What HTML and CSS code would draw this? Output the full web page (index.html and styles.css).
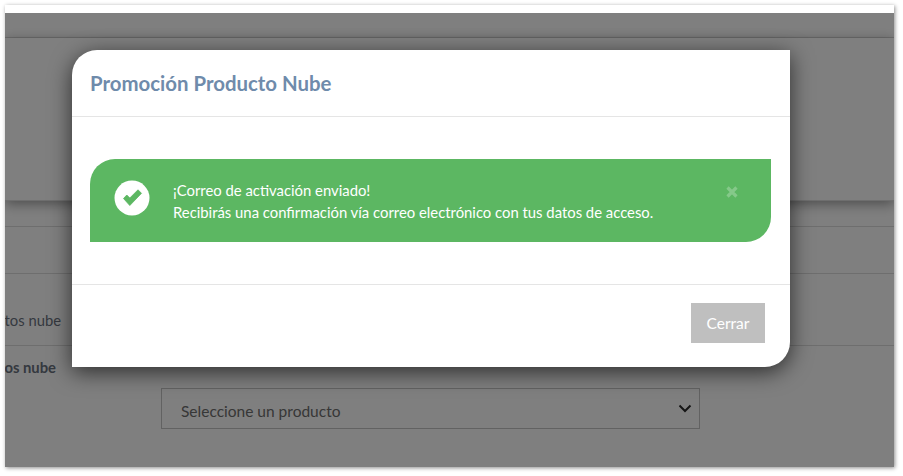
FILE: index.html
```html
<!DOCTYPE html>
<html lang="es">
<head>
    <meta charset="UTF-8">
    <meta name="viewport" content="width=device-width, initial-scale=1.0">
    <title>Promoción Producto Nube</title>
    <link rel="stylesheet" href="styles.css">
</head>
<body>

<div class="captura">
    <!-- Página de fondo -->
    <div class="pagina">
        <div class="franja"></div>
        <div class="seccion seccion-top"></div>
        <div class="seccion seccion-hero"></div>
        <div class="seccion seccion-tab"></div>
        <div class="seccion seccion-sub"></div>
        <div class="fila fila-productos">
            <span class="etiqueta">tos nube</span>
        </div>
        <div class="fila-form">
            <span class="etiqueta etiqueta-bold">os nube</span>
            <div class="select-falso">
                <span>Seleccione un producto</span>
                <svg class="chevron" viewBox="0 0 14 9" width="14" height="9">
                    <path d="M1.500 1.500 7 7l5.500-5.500" fill="none" stroke="#2b2b2b" stroke-width="2"/>
                </svg>
            </div>
        </div>
    </div>

    <!-- Modal -->
    <div class="overlay">
        <div class="modal">
            <div class="modal-header">
                <h2>Promoción Producto Nube</h2>
            </div>
            <div class="modal-body">
                <div class="alerta">
                    <svg class="icono-ok" viewBox="0 0 36 36" width="36" height="36">
                        <circle cx="18" cy="18" r="17.500" fill="#fff"/>
                        <path d="M9.500 18.500 12.800 15 15.800 18 24 9.800 27.500 13.300 15.800 25.500Z" fill="#5cb762" stroke="#5cb762" stroke-width="0.800" stroke-linejoin="round"/>
                    </svg>
                    <p class="alerta-texto">¡Correo de activación enviado!<br>Recibirás una confirmación vía correo electrónico con tus datos de acceso.</p>
                    <svg class="icono-cerrar" viewBox="0 0 12 12" width="12" height="12">
                        <path d="M1.500 1.500 10.500 10.500M10.500 1.500 1.500 10.500" fill="none" stroke="#fff" stroke-width="3.200"/>
                    </svg>
                </div>
            </div>
            <div class="modal-footer">
                <button type="button">Cerrar</button>
            </div>
        </div>
    </div>
</div>

</body>
</html>
```

FILE: styles.css
```css
/* Estilo Global */
body {
    font-family: 'Lato', 'Noto Sans', sans-serif;
    margin: 0;
    padding: 5px 9px 9px 5px;
    background-color: #fff;
    color: #333;
}

.captura {
    position: relative;
    height: 462px;
    overflow: hidden;
    background-color: #fff;
    box-shadow: 1px 1px 4px rgba(0, 0, 0, 0.45);
}

/* Fondo */
.franja {
    height: 8px;
}

.seccion {
    border-bottom: 1px solid #dcdcdc;
}

.seccion-top {
    height: 24px;
}

.seccion-hero {
    height: 162px;
    box-shadow: 0 3px 12px rgba(0, 0, 0, 0.4);
}

.seccion-tab {
    height: 25px;
}

.seccion-sub {
    height: 46px;
}

.fila {
    display: flex;
    height: 71px;
    border-bottom: 1px solid #dcdcdc;
}

.etiqueta {
    display: flex;
    justify-content: flex-end;
    flex: none;
    width: 56px;
    white-space: nowrap;
    font-size: 14.800px;
    color: #6a727e;
}

.fila-productos .etiqueta {
    padding-top: 37px;
}

.fila-form {
    display: flex;
    align-items: flex-start;
    height: 100px;
}

.etiqueta-bold {
    width: 51px;
    padding-top: 12px;
    font-weight: bold;
}

.select-falso {
    display: flex;
    align-items: center;
    justify-content: space-between;
    box-sizing: border-box;
    width: 539px;
    height: 41px;
    margin: 42px 0 0 105px;
    padding: 4px 7px 0 19px;
    border: 1px solid #c4c4c4;
    font-size: 15.500px;
    color: #6e6e6e;
}

.chevron {
    margin-top: -4px;
}

/* Modal */
.overlay {
    position: absolute;
    top: 8px;
    left: 0;
    right: 0;
    bottom: 0;
    background-color: rgba(0, 0, 0, 0.5);
}

.modal {
    box-sizing: border-box;
    width: 718px;
    height: 317px;
    margin: 37px 0 0 67px;
    background-color: #fff;
    border-radius: 25px 0 25px 0;
    box-shadow: 0 5px 22px rgba(0, 0, 0, 0.65);
}

.modal-header {
    box-sizing: border-box;
    height: 67px;
    padding: 21px 18px 0;
    border-bottom: 1px solid #e5e5e5;
}

.modal-header h2 {
    margin: 0;
    font-size: 20.400px;
    font-weight: bold;
    color: #6f8bab;
}

.modal-body {
    box-sizing: border-box;
    height: 168px;
    padding: 42px 19px 0 18px;
    border-bottom: 1px solid #e5e5e5;
}

.alerta {
    display: flex;
    align-items: center;
    height: 83px;
    padding: 0 33px 0 24px;
    background-color: #5cb762;
    border-radius: 25px 0 25px 0;
    color: #fff;
}

.icono-ok {
    flex: none;
    margin: 0 23px 6px 0;
}

.alerta-texto {
    flex: 1;
    margin: 0;
    font-size: 14.850px;
    line-height: 22px;
}

.icono-cerrar {
    flex: none;
    margin-bottom: 18px;
    opacity: 0.25;
}

.modal-footer {
    display: flex;
    justify-content: flex-end;
    padding: 18px 25px 0;
}

button {
    width: 74px;
    height: 40px;
    padding: 0;
    background-color: #bfbfbf;
    color: #fff;
    border: none;
    font-family: inherit;
    font-size: 15.500px;
}
```
